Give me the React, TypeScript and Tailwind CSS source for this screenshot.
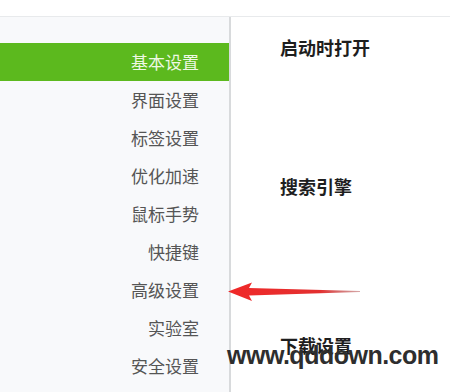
const menu = ["基本设置", "界面设置", "标签设置", "优化加速", "鼠标手势", "快捷键", "高级设置", "实验室", "安全设置"];

export default function App() {
  return (
    <div
      className="relative w-[450px] h-[392px] overflow-hidden bg-white"
      style={{ fontFamily: '"Noto Sans CJK SC", "Liberation Sans", sans-serif' }}
    >
      <div className="h-[17px] border-b border-[#e8eaec]" />
      <div className="flex h-[375px]">
        <div className="w-[231px] shrink-0 bg-[#f8f9fb] border-r-2 border-[#d8dadc] pt-[26px]">
          {menu.map((m, i) => (
            <div
              key={m}
              className={
                "h-[38px] flex items-center justify-end pr-[30px] text-[17px] " +
                (i === 0 ? "bg-[#5cb91e] text-[#eef8e4]" : "text-[#555]")
              }
            >
              {m}
            </div>
          ))}
        </div>
        <div className="flex-1 pl-[49px] text-[18px] font-bold text-[#1e1e1e] leading-none">
          <div className="pt-[21px] h-[160px]">启动时打开</div>
          <div className="h-[159px]">搜索引擎</div>
          <div>下载设置</div>
        </div>
      </div>

      {/* red arrow */}
      <svg className="absolute left-[226px] top-[281px]" width="140" height="22" viewBox="0 0 140 22">
        <defs>
          <linearGradient id="g" x1="0" x2="1" y1="0" y2="0">
            <stop offset="0" stopColor="#f02828" />
            <stop offset="0.7" stopColor="#e33030" />
            <stop offset="1" stopColor="#b05050" stopOpacity="0.5" />
          </linearGradient>
        </defs>
        <path d="M2 10.5 L26 1.5 L23 7 L134 10 L134 11 L23 14.5 L26 20 Z" fill="url(#g)" />
      </svg>

      {/* watermark */}
      <div
        className="absolute left-[227px] top-[343px] text-[25px] leading-none font-bold text-[#2e2e2e] tracking-[-0.5px]"
        style={{ fontFamily: '"Liberation Sans", Arial, sans-serif' }}
      >
        www.qddown.com
      </div>
    </div>
  );
}
